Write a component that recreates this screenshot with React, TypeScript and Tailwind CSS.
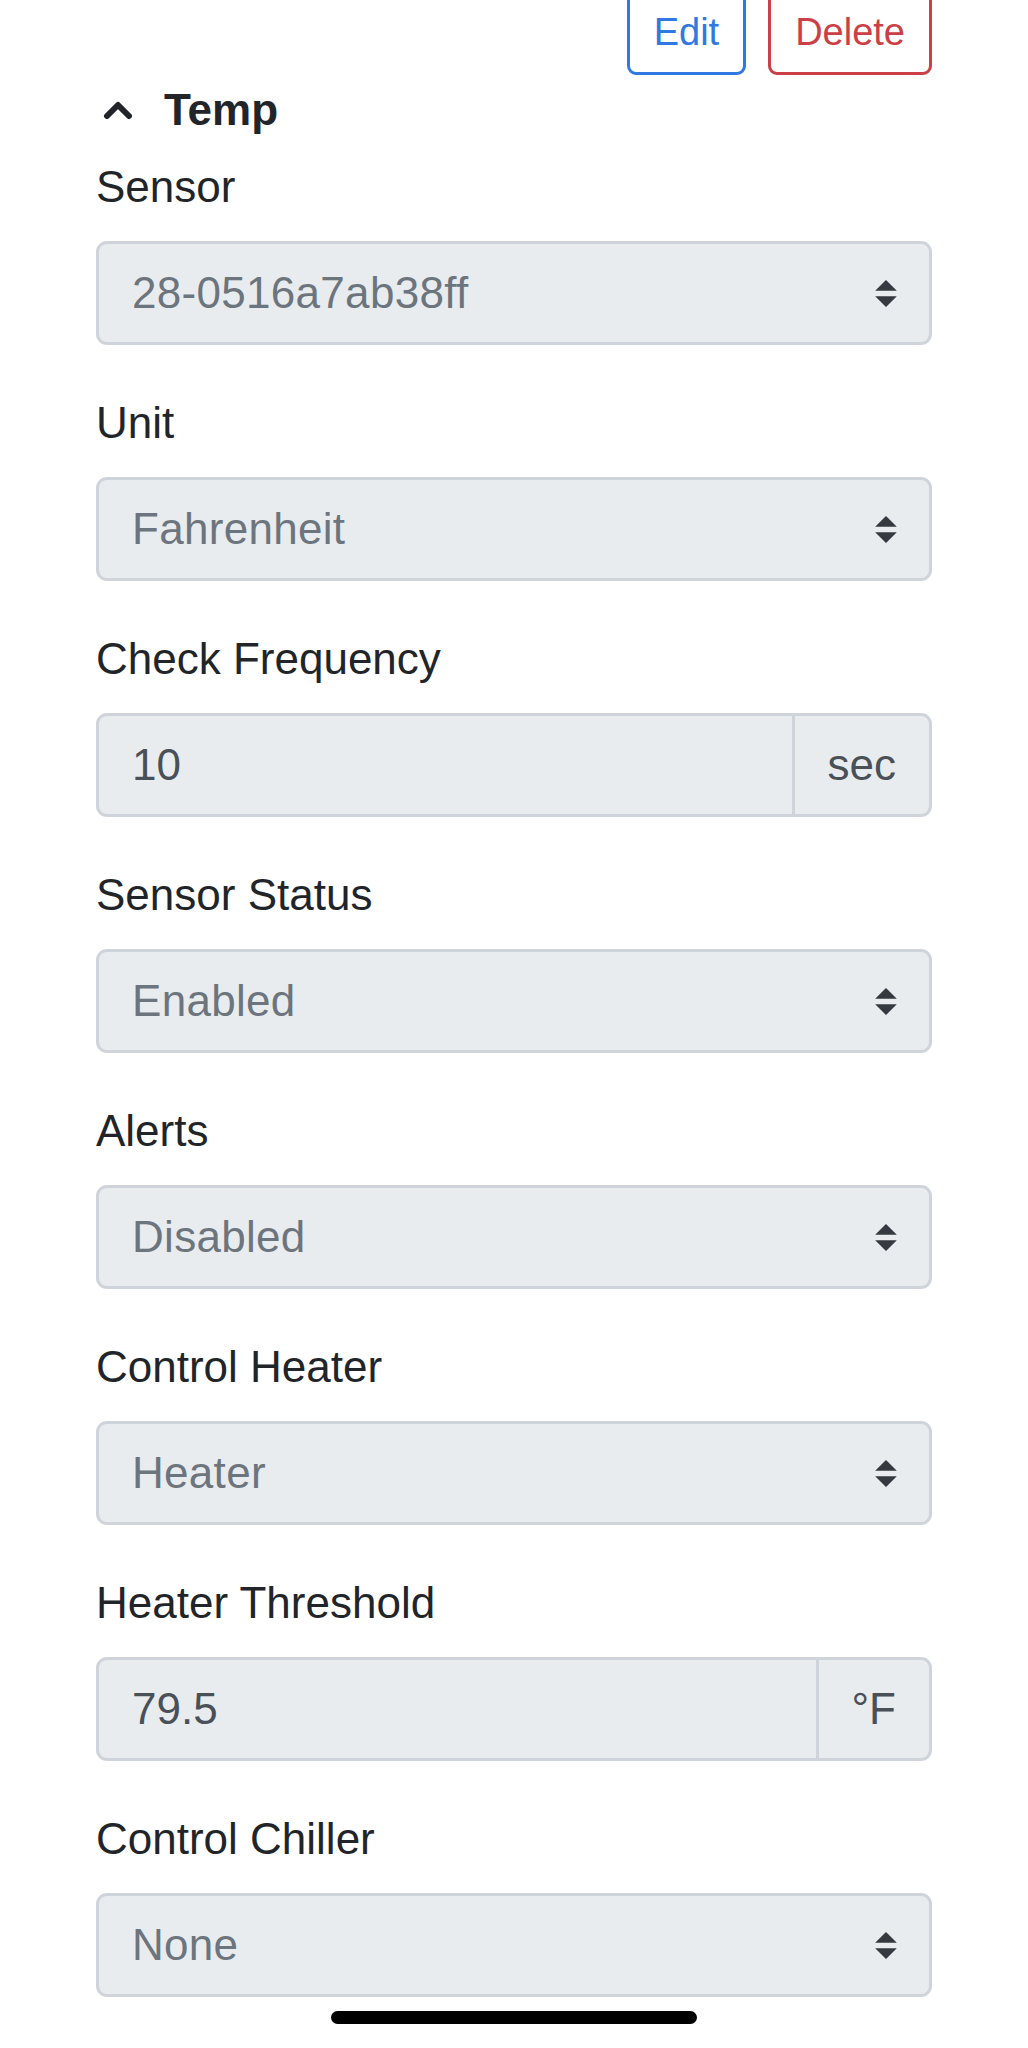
import React from "react";

type Field = {
  label: string;
  kind: "select" | "input";
  value: string;
  addon?: string;
};

const fields: Field[] = [
  { label: "Sensor", kind: "select", value: "28-0516a7ab38ff" },
  { label: "Unit", kind: "select", value: "Fahrenheit" },
  { label: "Check Frequency", kind: "input", value: "10", addon: "sec" },
  { label: "Sensor Status", kind: "select", value: "Enabled" },
  { label: "Alerts", kind: "select", value: "Disabled" },
  { label: "Control Heater", kind: "select", value: "Heater" },
  { label: "Heater Threshold", kind: "input", value: "79.5", addon: "°F" },
  { label: "Control Chiller", kind: "select", value: "None" },
];

function SelectArrows() {
  return (
    <svg viewBox="0 0 4 5" className="h-[27px] w-[22px] shrink-0">
      <path d="M2 0L0 2h4zm0 5L0 3h4z" fill="#343a40" />
    </svg>
  );
}

function FakeSelect({ value }: { value: string }) {
  return (
    <div className="flex h-[104px] items-center justify-between rounded-[11px] border-[3px] border-[#ced4da] bg-[#e9ecef] pl-[33px] pr-[32px] text-[44px] text-[#6c757d]">
      <span className="tracking-[0.3px]">{value}</span>
      <SelectArrows />
    </div>
  );
}

function AddonInput({ value, addon }: { value: string; addon: string }) {
  return (
    <div className="flex h-[104px]">
      <input
        readOnly
        value={value}
        className="h-full min-w-0 flex-1 rounded-l-[11px] border-[3px] border-[#ced4da] bg-[#e9ecef] px-[33px] text-[44px] text-[#495057] outline-none"
      />
      <div className="-ml-[3px] flex h-full items-center rounded-r-[11px] border-[3px] border-[#ced4da] bg-[#e9ecef] px-[33px] text-[44px] text-[#495057]">
        {addon}
      </div>
    </div>
  );
}

export default function App() {
  return (
    <main className="relative h-[2048px] overflow-hidden bg-white font-['Liberation_Sans',Arial,sans-serif] text-[#212529]">
      <div className="px-[96px]">
        {/* edit / delete (top cut off, page is scrolled) */}
        <div className="-mt-[10px] flex justify-end gap-[22px]">
          <button
            type="button"
            className="h-[85px] rounded-[9px] border-[3px] border-[#3079e3] px-[24px] text-[38px] text-[#3079e3]"
          >
            Edit
          </button>
          <button
            type="button"
            className="h-[85px] rounded-[9px] border-[3px] border-[#cd3f46] px-[24px] text-[38px] text-[#cd3f46]"
          >
            Delete
          </button>
        </div>

        <div className="mt-[2px] mb-[12px] flex h-[66px] items-center">
          <svg viewBox="0 0 30 18" className="ml-[7px] h-[18px] w-[30px]">
            <polyline
              points="4,15 15,4 26,15"
              fill="none"
              stroke="#212529"
              strokeWidth="6"
              strokeLinecap="round"
              strokeLinejoin="round"
            />
          </svg>
          <span className="ml-[31px] text-[44px] font-bold">Temp</span>
        </div>

        {fields.map((f) => (
          <div key={f.label} className="mb-[46px]">
            <div className="mb-[22px] text-[44px] leading-[64px]">{f.label}</div>
            {f.kind === "select" ? (
              <FakeSelect value={f.value} />
            ) : (
              <AddonInput value={f.value} addon={f.addon ?? ""} />
            )}
          </div>
        ))}
      </div>

      {/* iOS home indicator */}
      <div className="absolute bottom-[24px] left-1/2 h-[13px] w-[366px] -translate-x-1/2 rounded-full bg-black" />
    </main>
  );
}
